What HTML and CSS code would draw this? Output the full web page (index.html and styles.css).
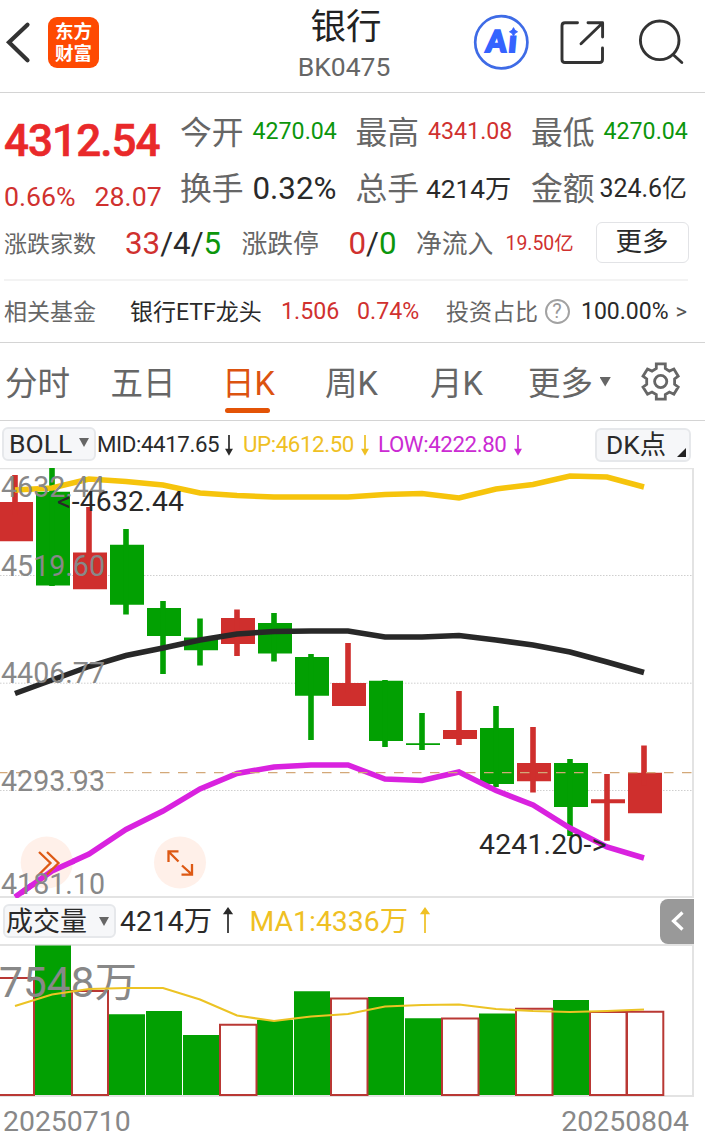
FILE: index.html
```html
<!DOCTYPE html>
<html lang="zh-CN">
<head>
<meta charset="utf-8">
<title>银行 BK0475</title>
<link rel="stylesheet" href="styles.css">
</head>
<body>
<header class="header">
  <svg class="back" width="48" height="92" viewBox="0 0 48 92"><path d="M27.5 24.8 9 42.3l18.500 17.9"/></svg>
  <div class="logo"><span>东方</span><span>财富</span></div>
  <div class="heading"><h1 class="name">银行</h1><div class="code">BK0475</div></div>
  <svg class="actions" width="237" height="92" viewBox="468 0 237 92">
    <circle class="ai-ring" cx="501.3" cy="42.3" r="26.1"/>
    <text class="ai-text" transform="translate(485.500 52.300) skewX(-5)" textLength="20" lengthAdjust="spacingAndGlyphs">A</text>
    <text class="ai-text" transform="translate(508 52.300) skewX(-5)">ı</text>
    <path class="ai-star" d="M513.500 27.600q1 3.200 4.100 4.200-3.100 1-4.100 4.200-1-3.200-4.100-4.200 3.100-1 4.100-4.200z"/>
    <path class="tool" d="M577.500 22.800H565q-3 0-3 3V59.500q0 3 3 3H599.500q3 0 3-3V48M588 22.800h14.600V37M602 23.500 581 43.800"/>
    <circle class="tool" cx="659.700" cy="40.300" r="19.300"/>
    <path class="tool" d="M673 54.500l8.800 8"/>
  </svg>
</header>

<section class="quote">
  <div class="quote-top">
    <div class="last">
      <div class="price">4312.54</div>
      <div class="change"><span>0.66%</span><span>28.07</span></div>
    </div>
    <div class="stats">
      <span class="label">今开</span><span class="v23 green">4270.04</span>
      <span class="label">最高</span><span class="v23 red">4341.08</span>
      <span class="label">最低</span><span class="v23 green">4270.04</span>
      <span class="label">换手</span><span class="v31">0.32%</span>
      <span class="label">总手</span><span class="v26">4214万</span>
      <span class="label">金额</span><span class="v25">324.6亿</span>
    </div>
  </div>
  <div class="breadth">
    <span class="label-s">涨跌家数</span>
    <span class="v31"><b class="red">33</b>/4/<b class="green">5</b></span>
    <span class="label-m">涨跌停</span>
    <span class="v31"><b class="red">0</b>/<b class="green">0</b></span>
    <span class="label-m">净流入</span>
    <span class="v19 red">19.50亿</span>
    <button class="more">更多</button>
  </div>
  <div class="fund">
    <span class="label-s">相关基金</span>
    <span class="v23 fund-name">银行ETF龙头</span>
    <span class="v23 red">1.506</span>
    <span class="v23 red">0.74%</span>
    <span class="label-s">投资占比</span>
    <span class="help">?</span>
    <span class="v23 ratio">100.00%</span>
    <span class="gt">&gt;</span>
  </div>
</section>

<nav class="tabs">
  <span>分时</span><span>五日</span><span class="active">日K</span><span>周K</span><span>月K</span><span>更多</span>
  <svg width="105" height="77" viewBox="600 343 105 77">
    <path class="caret" d="M599.500 377h11.300l-5.600 9.500z"/>
    <path class="gear" d="M656.300 368.500V363.900H665.300V368.500L669.400 371.100 673.900 369 678.200 376.200 674.600 378.900V384.300L678.200 387 673.900 394.200 669.400 392 665.300 394.500V399.100H656.300V394.500L652 392 647.500 394.200 643 387 646.700 384.300V378.900L643 376.200 647.500 369 652 371.100z"/>
    <circle class="gear" cx="660.700" cy="381.500" r="6.100"/>
  </svg>
</nav>

<div class="indicators">
  <button class="pick boll"><span>BOLL</span><i class="tri"></i></button>
  <span class="readout">MID:4417.65</span>
  <svg class="arrow" width="12" height="22" viewBox="0 0 12 22"><path d="M6 1v18M3.500 15.500 6 20l2.500-4.500z"/></svg>
  <span class="readout up">UP:4612.50</span>
  <svg class="arrow up" width="12" height="22" viewBox="0 0 12 22"><path d="M6 1v18M3.500 15.500 6 20l2.500-4.500z"/></svg>
  <span class="readout low">LOW:4222.80</span>
  <svg class="arrow low" width="12" height="22" viewBox="0 0 12 22"><path d="M6 1v18M3.500 15.500 6 20l2.500-4.500z"/></svg>
  <button class="pick dk"><span>DK点</span><i class="corner"></i></button>
</div>

<svg class="chart" width="705" height="430" viewBox="0 468 705 430">
  <path class="frame" d="M0 468.300H693V897H0"/>
  <path class="grid" d="M0 575.500H693M0 683.200H693M0 790.500H693"/>
  <path class="candle-red" d="M-1 502h34v39.300h-34zM73 552.500h34v36.800h-34zM221 618h34v26h-34zM332 683h34v23h-34zM443 730h34v9h-34zM517 763h34v18.300h-34zM591 799.300h34v4h-34zM628 772.700h34v40.500h-34z"/>
  <path class="candle-green" d="M36 491.700h34v93.700h-34zM110 544.800h34v60h-34zM147 608h34v28h-34zM184 637.500h34v12.700h-34zM258 623h34v30.400h-34zM295 657h34v38.700h-34zM369 680.700h34v60.300h-34zM406 743.300h34v1.700h-34zM480 728h34v56h-34zM554 763h34v44h-34z"/>
  <path class="wick-red" d="M15 475v40M89 507v60M237 609.500v46.500M348 643v50M459 691v54M533 727v65.500M607 774v66.700M644 745.500v40"/>
  <path class="wick-green" d="M52 468v118M126 529v85.500M163 601v73M200 618.500v47M274 613v48.600M311 654v86M385 680v67M422 713v37M496 706v81M570 759v77"/>
  <polyline class="line up" points="15,490 52,488 89,479 126,481.500 163,485 200,493 237,495.500 274,497 311,497 348,497 385,494.500 422,493.500 459,498 496,489 533,484.500 570,476 607,477 644,487"/>
  <polyline class="line mid" points="15,693.500 52,680 89,666.500 126,655.500 163,648 200,640 237,634 274,631.500 311,631 348,631 385,637 422,637 459,635.500 496,640 533,645 570,652 607,662 644,672.500"/>
  <polyline class="line low" points="15,897 52,871 89,854 126,829.500 163,811 200,789 237,773.500 274,767 311,765 348,765 385,779 422,780.500 459,772 496,790.500 533,805 570,828 607,847 644,858"/>
  <path class="current" d="M0 772.600H693"/>
  <circle class="bubble" cx="46.700" cy="862.500" r="26"/>
  <circle class="bubble" cx="180" cy="862.500" r="26"/>
  <path class="line low" d="M21 893 52 871 74 861"/>
  <path class="bubble-icon" d="M39 852l11.500 11L39 874.500M47 852l11.500 11L47 874.500M178.500 851.300H168.500V862M169 852l9.500 9.500M181.500 874.700H192V864M191.500 874.200 182 865.500"/>
  <g class="axis">
    <text x="1" y="496.700" textLength="104">4632.44</text><text x="1" y="575.700" textLength="104">4519.60</text><text x="1" y="682.700" textLength="104">4406.77</text><text x="1" y="790.700" textLength="104">4293.93</text><text x="1" y="893.500" textLength="104">4181.10</text>
  </g>
  <text class="mark" x="57" y="510.700" textLength="127">&lt;-4632.44</text>
  <text class="mark" x="479" y="853.700" textLength="127.500">4241.20-&gt;</text>
</svg>

<div class="volume-bar">
  <button class="pick vol"><span>成交量</span><i class="tri"></i></button>
  <span class="vol-text">4214万</span>
  <svg class="arrow" width="14" height="28" viewBox="0 0 14 28"><path d="M7 26V4M3.500 6.500 7 1.500l3.500 5z"/></svg>
  <span class="vol-text up">MA1:4336万</span>
  <svg class="arrow up" width="14" height="28" viewBox="0 0 14 28"><path d="M7 26V4M3.500 6.500 7 1.500l3.500 5z"/></svg>
  <svg class="drawer" width="34" height="45" viewBox="0 0 34 45"><path d="M22.500 13.500 13.500 22l9 8.500"/></svg>
</div>

<svg class="chart" width="705" height="153" viewBox="0 944 705 153">
  <path class="frame" d="M0 945H693V1096H0"/>
  <path class="vol-green" d="M35 945.500h36v149.500h-36zM109 1014.300h36v80.700h-36zM146 1011h36v84h-36zM183 1035h36v60h-36zM257 1020h36v75h-36zM294 991.200h36v103.800h-36zM368 997h36v98h-36zM405 1018.300h36v76.700h-36zM479 1013.500h36v81.500h-36zM553 1000h36v95h-36z"/>
  <path class="vol-red" d="M-3 978h37v117h-37zM72 991h36v104h-36zM220 1024.700h36.500v70.300h-36.500zM331 998.500h36.500v96.500h-36.500zM442 1018.500h36.500v76.500h-36.500zM516 1008.700h36.500v86.300h-36.500zM590 1012h36.500v83h-36.500zM627 1011.700h36.300v83.300h-36.300z"/>
  <text class="peak" x="-1" y="997" textLength="138">7548万</text>
  <polyline class="ma" points="15,1006 52,994.500 89,989 126,988 163,988 200,999.500 237,1015.500 274,1021 311,1016.500 348,1014 385,1006.500 422,1005 459,1004.500 496,1009 533,1011 570,1012 607,1011 644,1009.500"/>
</svg>
<footer class="dates"><span>20250710</span><span>20250804</span></footer>
</body>
</html>
```

FILE: styles.css
```css
* { box-sizing: border-box; }
body {
  margin: 0;
  width: 705px;
  height: 1148px;
  overflow: hidden;
  background: #fff;
  color: #2a2a2a;
  font-family: Roboto, "Noto Sans CJK SC", sans-serif;
  font-weight: 370;
  line-height: 1;
  white-space: nowrap;
}
b, i { font-weight: inherit; font-style: normal; }
svg { display: block; fill: none; }
button {
  font: inherit;
  color: inherit;
  padding: 0;
  border: 1px solid #e2e3e6;
  border-radius: 6px;
  background: #fff;
}
.red { color: #d0312f; }
.green { color: #0c960c; }

/* header */
.header {
  display: grid;
  grid-template-columns: 48px 51px 369px 237px;
  height: 93px;
  border-bottom: 1px solid #d4d4d4;
}
.back path { stroke: #333; stroke-width: 4.2; stroke-linecap: round; }
.logo {
  display: flex;
  flex-direction: column;
  align-items: center;
  gap: 3.500px;
  width: 51px;
  height: 51px;
  margin-top: 17px;
  padding-top: 6px;
  border-radius: 9px;
  background: #fe4a02;
  color: #fff;
  font-size: 18.500px;
  font-weight: 700;
}
.heading { padding-left: 144px; width: 346px; text-align: center; }
.name { margin: 10px 0 0; padding-left: 4px; font-size: 35.500px; font-weight: 370; color: #222; }
.code { margin-top: 8px; font-size: 26.500px; color: #666; }
.ai-ring { stroke: #3e6be6; stroke-width: 2.700; }
.ai-text { fill: #3563ff; stroke: #3563ff; stroke-width: 2.200; font: 900 30px Lato, sans-serif; }
.ai-star { fill: #3563ff; stroke: #3563ff; stroke-width: 0.800; }
.tool { stroke: #333; stroke-width: 2.900; stroke-linecap: round; stroke-linejoin: round; }

/* quote */
.quote { height: 250px; border-bottom: 1px solid #d4d4d4; }
.quote-top { display: grid; grid-template-columns: 180px 1fr; height: 128px; }
.price {
  margin: 26px 0 0 4px;
  font-size: 44px;
  font-weight: 500;
  letter-spacing: -0.950px;
  -webkit-text-stroke: 0.600px #e9292a;
  color: #e9292a;
}
.change { display: flex; gap: 19px; margin: 21px 0 0 4px; font-size: 26.700px; color: #d0312f; }
.stats {
  display: grid;
  grid-template-columns: 72.500px 103px 72.500px 103px 72.500px 1fr;
  grid-template-rows: 56px 56px;
  align-items: center;
  padding-top: 11px;
}
.label, .label-m, .label-s { color: #666; }
.label { font-size: 31.800px; padding-top: 4px; }
.label-m { font-size: 25.800px; padding-top: 3px; }
.label-s { font-size: 23px; padding-top: 2px; }
.v19 { font-size: 19.400px; padding-top: 1px; }
.v23 { font-size: 23.200px; }
.v25 { font-size: 24.900px; margin-left: -4px; padding-top: 2px; }
.v26 { font-size: 26.300px; margin-left: -2px; padding-top: 2px; }
.v31 { font-size: 31.300px; padding-top: 1px; }
.breadth {
  display: grid;
  grid-template-columns: 121px 116.500px 107px 67.500px 89.500px 90px 93px;
  align-items: center;
  height: 44px;
  padding-left: 4px;
}
.more { height: 41px; margin-top: -2px; font-size: 26.500px; }
.fund {
  display: grid;
  grid-template-columns: 126px 151px 76px 89px 98.500px 36.500px 94.500px 20px;
  align-items: center;
  width: 684px;
  height: 63px;
  margin: 14px 0 0 4px;
  border-top: 2px solid #f3f3f3;
}
.fund-name { padding-top: 1px; font-size: 23px; }
.help {
  width: 25px;
  height: 25px;
  border: 2px solid #a2a2a2;
  border-radius: 50%;
  color: #999;
  font-size: 20px;
  line-height: 21px;
  text-align: center;
}
.ratio { font-size: 23px; }
.gt { font-size: 22px; color: #555; }

/* period tabs */
.tabs {
  display: grid;
  grid-template-columns: 105.500px 111.500px 103px 105px 98px 72px 105px;
  align-items: center;
  height: 78px;
  padding-left: 5px;
  border-bottom: 1px solid #d4d4d4;
  color: #666;
  font-size: 32.500px;
}
.tabs span { padding-top: 5px; }
.active { position: relative; color: #dc5310; }
.active::after {
  content: "";
  position: absolute;
  left: 3px;
  top: 45px;
  width: 45px;
  height: 5px;
  border-radius: 3px;
  background: #e35306;
}
.caret { fill: #666; }
.gear { stroke: #666; stroke-width: 2.800; }

/* indicator row */
.indicators {
  display: grid;
  grid-template-columns: 95px 126px 20px 115.500px 19.500px 134px 83px 96px;
  align-items: center;
  height: 47px;
  padding-left: 2px;
  font-size: 22.300px;
}
.readout { letter-spacing: -0.400px; }
.pick {
  display: flex;
  align-items: center;
  justify-content: space-between;
  background: #f6f7f9;
  border: 2px solid #e6e8eb;
}
.boll { width: 94px; height: 34px; margin-top: -2px; padding: 0 5px 0 5px; font-size: 26.500px; }
.dk { width: 96px; height: 34px; padding: 0 3px 0 9px; font-size: 26.300px; }
.boll span { padding-top: 2px; }
.dk span, .vol span { padding-top: 2px; }
.tri { border: 5.500px solid transparent; border-top: 9px solid #666; border-bottom: 0; }
.boll .tri { margin: -2px 0 0 -6px; }
.corner { align-self: flex-end; margin-bottom: 3px; border-left: 9px solid transparent; border-bottom: 9px solid #222; }
.up { color: #efc023; }
.low { color: #cb2bd3; }
.arrow path { stroke: currentColor; fill: currentColor; stroke-width: 1.700; }

/* charts */
.frame { stroke: #e3e3e3; stroke-width: 2; }
.grid { stroke: #cfcfcf; stroke-width: 1; stroke-dasharray: 1.500 1.500; }
.candle-red { fill: #cf2f2d; }
.candle-green { fill: #02a002; }
.wick-red { stroke: #cf2f2d; stroke-width: 5.600; }
.wick-green { stroke: #02a002; stroke-width: 5.600; }
.current { stroke: #d3a878; stroke-width: 1.300; stroke-dasharray: 9.500 8.500; stroke-dashoffset: 2; }
.line { stroke-width: 5.500; }
.line.up { stroke: #f6c40c; }
.line.mid { stroke: #282828; }
.line.low { stroke: #d922df; }
.bubble { fill: #fff0e9; }
.bubble-icon { stroke: #dd5914; stroke-width: 2.300; }
.axis { fill: #888; font-size: 28.600px; }
.mark { fill: #282828; font-size: 28.300px; }
.volume-bar {
  display: grid;
  grid-template-columns: 117px 101px 28.500px 168px 242.500px 34px;
  align-items: center;
  height: 46px;
  padding-left: 3px;
  font-size: 28.400px;
}
.vol-text { padding-top: 2px; }
.vol { width: 113px; height: 34px; padding: 0 5px 0 1px; font-size: 27px; }
.drawer { margin-top: 1px; border-radius: 8px 0 0 8px; background: #999; }
.drawer path { stroke: #fff; stroke-width: 3.200; }
.vol-green { fill: #02a002; }
.vol-red { stroke: #b93834; stroke-width: 2; }
.peak { fill: #888; font-size: 42.300px; }
.ma { stroke: #ecc324; stroke-width: 2.200; }
.dates {
  display: flex;
  justify-content: space-between;
  padding: 11px 16px 0 3px;
  font-size: 28.400px;
  color: #888;
}
```
